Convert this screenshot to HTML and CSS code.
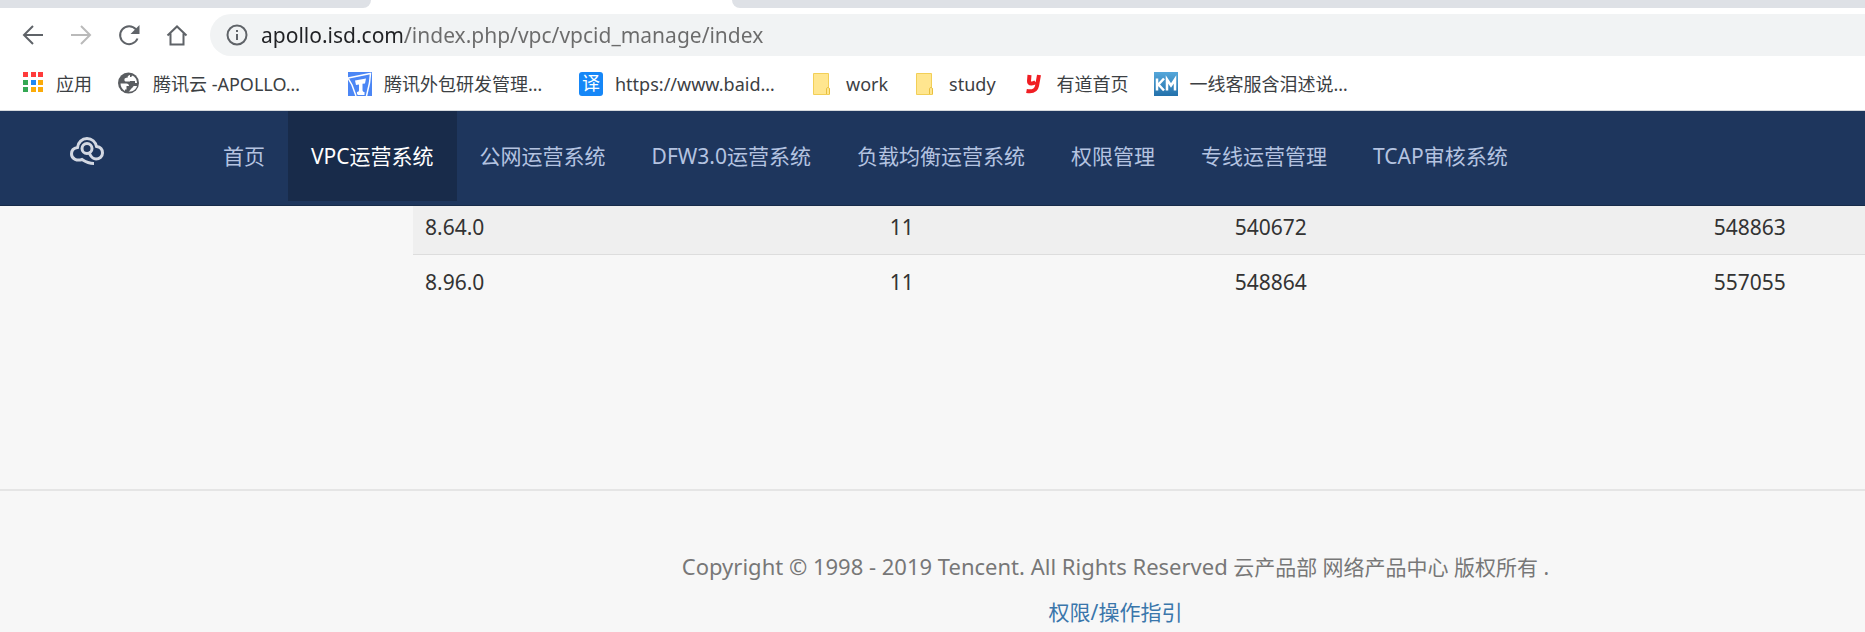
FILE: index.html
```html
<!DOCTYPE html>
<html lang="zh-CN">
<head>
<meta charset="utf-8">
<title>VPC运营系统</title>
<link rel="stylesheet" href="styles.css">
</head>
<body>
<div class="browser">
  <div class="tabs">
    <div class="tab-rest tab-before"></div>
    <div class="tab-rest tab-after"></div>
  </div>
  <div class="toolbar">
    <div class="tools">
      <button class="tool" aria-label="后退"><svg viewBox="0 0 24 24"><path d="M22 12H3M12 3l-9 9 9 9"/></svg></button>
      <button class="tool tool-off" aria-label="前进" disabled><svg viewBox="0 0 24 24"><path d="M2 12h19M12 3l9 9-9 9"/></svg></button>
      <button class="tool" aria-label="刷新"><svg viewBox="0 0 24 24"><path d="M20.500 15.500A9 9 0 1 1 19 6.300"/><path class="solid" d="M22.500 2v9h-9z"/></svg></button>
      <button class="tool" aria-label="主页"><svg viewBox="0 0 24 24"><path d="M2.500 12.500L12 3.500l9.500 9M5.500 10.500v11h13v-11"/></svg></button>
    </div>
    <label class="omnibox">
      <svg class="info" viewBox="0 0 22 22" role="img" aria-label="网站信息"><circle cx="11" cy="11" r="9.500"/><path d="M11 10v6M11 6v2"/></svg>
      <input class="url" type="text" aria-label="地址" value="apollo.isd.com/index.php/vpc/vpcid_manage/index">
    </label>
  </div>
  <nav class="bookmarks" aria-label="书签">
    <a class="mark" href="#"><svg viewBox="0 0 24 24"><path fill="#ff3b3b" d="M3 0h5v5H3zM11 0h5v5h-5zM18 0h5v5h-5z"/><path fill="#34a853" d="M3 8h5v5H3zM3 15h5v5H3z"/><path fill="#1e88f5" d="M11 8h5v5h-5z"/><path fill="#fbab09" d="M18 8h5v5h-5zM11 15h5v5h-5zM18 15h5v5h-5z"/></svg><span>应用</span></a>
    <a class="mark" href="#"><svg viewBox="0 0 24 24"><circle cx="11.500" cy="11" r="10.500" fill="#5a5d61"/><path fill="#fff" d="M3.500 11.500h6c1.500 0 2.500 1 2.500 2.500h-2.500v3.500H8v1.500c-2.500-1.500-4.500-4-4.500-7.500zM13 3c-1 0-2.500 1-2.500 2.500 0 1-2.500 0-3 1.500-.5 2 .5 2.500 2 2.500h3.500c1 0 1 1.500 2 1.500h5c0-3.500-2-6.500-5-7.500 0 1-1 1.500-2 1.500z"/><path fill="#fff" d="M11.500 19.500c2-.5 2-3 3.500-3.500 1-.5 1-2 2-2h3c-1 3.500-4.500 6-8.500 5.500z"/><path fill="#5a5d61" d="M13 9h5v2h-5z"/></svg><span class="clip">腾讯云 -APOLLO…</span></a>
    <a class="mark" href="#"><svg viewBox="0 0 24 24"><path fill="#4b86f5" d="M0 0h24v24H0z"/><path fill="none" stroke="#fff" stroke-width="1.500" d="M0 6l22.500-4.500L21.500 11l-3 13M0 6l4 7 4 11"/><path fill="#fff" d="M7 8.500l11-2-1 5-2.500.3V18c0 1.500 1 2 2 2v3H10c-1.500-1-1-2-1-3 1.500 0 2-1 2-2v-5.500l-3 .5z"/></svg><span class="clip">腾讯外包研发管理…</span></a>
    <a class="mark" href="#"><svg viewBox="0 0 24 24"><rect width="24" height="24" rx="3" fill="#1687f7"/><text class="yi" x="12" y="18" text-anchor="middle">译</text></svg><span class="clip">https://www.baid…</span></a>
    <a class="mark" href="#"><svg viewBox="0 0 24 24"><path fill="#ffe68f" stroke="#f2cf57" d="M3.500 1.500h15v14l1 1v6h-16z"/><path fill="#ffe68f" stroke="#e8bf3f" d="M16.500 22v-5c0-2 3-2 3 0v5"/></svg><span>work</span></a>
    <a class="mark" href="#"><svg viewBox="0 0 24 24"><path fill="#ffe68f" stroke="#f2cf57" d="M3.500 1.500h15v14l1 1v6h-16z"/><path fill="#ffe68f" stroke="#e8bf3f" d="M16.500 22v-5c0-2 3-2 3 0v5"/></svg><span>study</span></a>
    <a class="mark" href="#"><svg viewBox="0 0 24 24"><path fill="none" stroke="#f01e23" stroke-width="4" d="M8.500 3L8 9c0 3.500 4 3 6.500 1M18 3l-2 11c-1 5-5 6-10.500 5"/></svg><span>有道首页</span></a>
    <a class="mark" href="#"><svg viewBox="0 0 24 24"><defs><linearGradient id="km" x2="0" y2="1"><stop stop-color="#55a7da"/><stop offset="1" stop-color="#2371ab"/></linearGradient></defs><path fill="url(#km)" d="M0 0h24v24H0z"/><path fill="none" stroke="#fff" stroke-width="2.500" d="M3 6.500v12M10 6.500l-5.500 6 5.500 6M13 18.500v-11l4 6 4-6v11"/></svg><span>一线客服含泪述说…</span></a>
  </nav>
</div>

<header class="navbar">
  <a class="brand" href="#" aria-label="首页"><svg viewBox="0 0 34 28"><path d="M24 26.500c-5.500 0-9-2-12-4-4.500 1.500-10.500 0-10.500-5.500 0-4 2.500-6 6-6.500C8 5.500 12 1.500 17 1.500s8.500 3.500 9.500 8c4 .5 6 3 6 6.500s-3 6-6.500 6c-5 0-5.500-4.500-7.500-7"/><circle cx="17" cy="11.500" r="5"/></svg></a>
  <nav class="menu" aria-label="主导航">
    <a href="#">首页</a>
    <a class="active" href="#" aria-current="page">VPC运营系统</a>
    <a href="#">公网运营系统</a>
    <a href="#">DFW3.0运营系统</a>
    <a href="#">负载均衡运营系统</a>
    <a href="#">权限管理</a>
    <a href="#">专线运营管理</a>
    <a href="#">TCAP审核系统</a>
  </nav>
</header>

<main class="content">
  <table class="grid">
    <colgroup><col class="c-net"><col class="c-mask"><col class="c-start"><col></colgroup>
    <tbody>
      <tr><td>8.64.0</td><td>11</td><td>540672</td><td>548863</td></tr>
      <tr><td>8.96.0</td><td>11</td><td>548864</td><td>557055</td></tr>
    </tbody>
  </table>
</main>

<footer class="footer">
  <p><span class="legal">Copyright © 1998 - 2019 Tencent. All Rights Reserved</span> 云产品部 网络产品中心 版权所有 .</p>
  <p><a href="#">权限/操作指引</a></p>
</footer>
</body>
</html>
```
FILE: styles.css
```css
* { box-sizing: border-box; }

body {
  margin: 0;
  min-height: 100vh;
  overflow-x: hidden;
  background: #f7f7f7;
  color: #333;
  font: 21px/30px "Noto Sans", "Noto Sans CJK SC", sans-serif;
}

a { text-decoration: none; }

/* Browser frame */
.browser {
  background: #fff;
  border-bottom: 1px solid #d5d9dd;
}

.tabs {
  display: flex;
  justify-content: space-between;
  gap: 361px;
  height: 8px;
}
.tab-rest { background: #dee1e6; }
.tab-before { width: 371px; border-bottom-right-radius: 10px; }
.tab-after { flex: 1; border-bottom-left-radius: 10px; }

.toolbar {
  display: flex;
  align-items: center;
  gap: 21px;
  height: 54px;
  padding-left: 21px;
}
.tools {
  display: flex;
  gap: 24px;
}
.tool {
  flex: none;
  width: 24px;
  height: 24px;
  padding: 0;
  border: 0;
  background: none;
}
.tool svg {
  display: block;
  fill: none;
  stroke: #5f6368;
  stroke-width: 2;
}
.tool .solid { fill: #5f6368; stroke: none; }
.tool-off svg { stroke: #bababa; }

.omnibox {
  flex: 1;
  display: flex;
  align-items: center;
  gap: 13px;
  height: 42px;
  padding-left: 16px;
  border-radius: 21px 0 0 21px;
  background: #f1f3f4;
}
.info {
  flex: none;
  width: 22px;
  height: 22px;
  fill: none;
  stroke: #5f6368;
  stroke-width: 2;
}
.url {
  flex: 1;
  height: 30px;
  padding: 0;
  border: 0;
  outline: 0;
  color: #202124;
  font: inherit;
  /* host name dark, path grey */
  background: linear-gradient(90deg, #202124 144px, #6b6b6b 144px);
  -webkit-background-clip: text;
  background-clip: text;
  -webkit-text-fill-color: transparent;
}

.bookmarks {
  display: flex;
  align-items: center;
  gap: 25px;
  height: 48px;
  padding: 0 20px 5px;
}
.mark {
  display: flex;
  align-items: center;
  gap: 12px;
  color: #3c4043;
  font-size: 18px;
  line-height: 26px;
  white-space: nowrap;
}
.mark svg { flex: none; width: 24px; height: 24px; }
.clip { width: 170px; }
.yi { fill: #fff; font-size: 18px; }

/* Site navigation */
.navbar {
  position: relative;
  z-index: 1;
  display: flex;
  height: 95px;
  background: #1e365d;
  border-bottom: 1px solid #172b49;
}
.brand {
  width: 200px;
  padding: 26px 0 0 70px;
}
.brand svg {
  display: block;
  width: 34px;
  height: 28px;
  fill: none;
  stroke: #d3d8e2;
  stroke-width: 3;
}
.menu { display: flex; }
.menu a {
  height: 90px;
  padding: 30px 23px;
  color: #b4c3e0;
  white-space: nowrap;
}
.menu .active { background: #182b4a; color: #fff; }

.content {
  min-height: 289px;
  margin-top: -6px;
  padding-left: 413px;
}
.grid {
  width: 100%;
  border-collapse: collapse;
  table-layout: fixed;
}
.c-net { width: 32%; }
.c-mask { width: 345px; }
.c-start { width: 33%; }
.grid td { padding: 12px; }
.grid tr:first-child { background: #efefef; border-bottom: 1px solid #ddd; }

.footer {
  padding: 60px 0 0 366px;
  border-top: 2px solid #e5e5e5;
  color: #777;
  text-align: center;
}
.footer p { margin: 0 0 15px; }
.footer p:last-child { margin-bottom: 0; }
.footer a { color: #3a76ab; }
.legal { font-size: 22px; }
```
